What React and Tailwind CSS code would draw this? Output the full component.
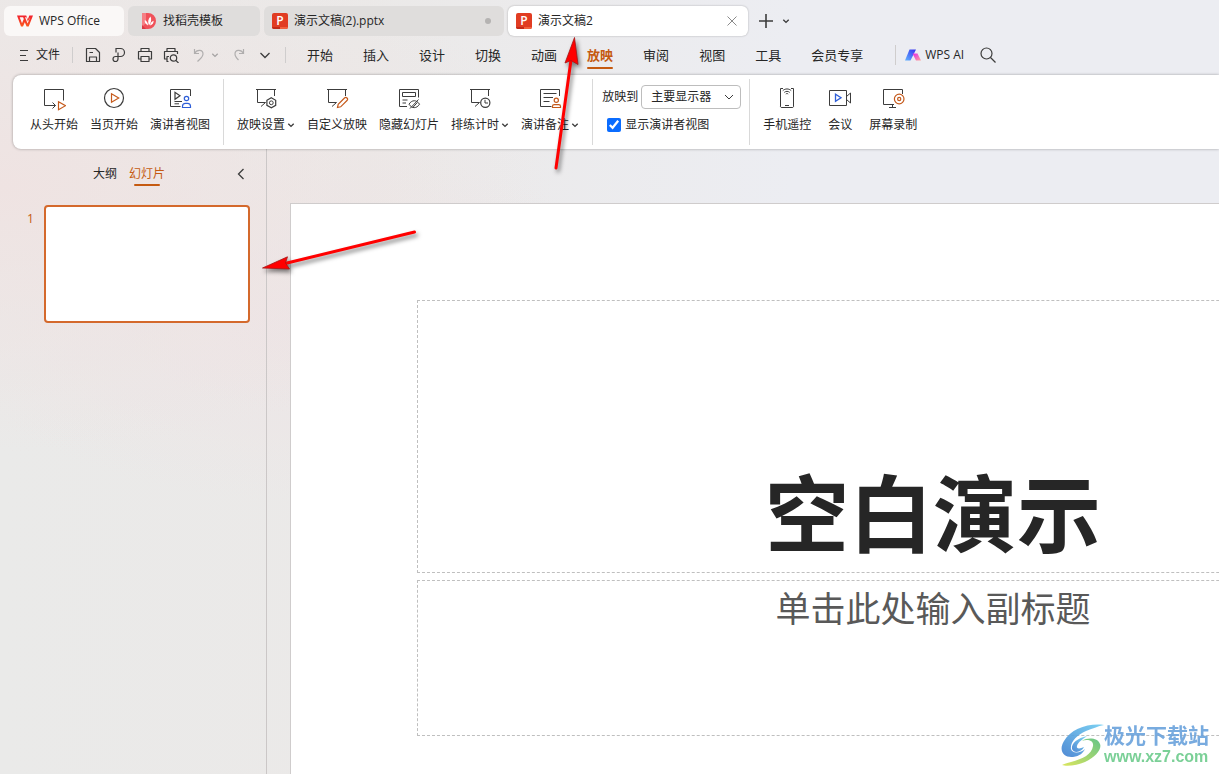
import React, { useState } from 'react';

// Generic stroke icon, drawn on a 24px grid
const Icon = ({ children, className = 'w-6 h-6', viewBox = '0 0 24 24' }) => (
  <svg className={className} viewBox={viewBox} fill="none" stroke="#3c3c3c" aria-hidden="true">
    {children}
  </svg>
);

const ORANGE = '#c55a1c';
const BLUE = '#2f5fd8';

const SmallChevron = () => (
  <Icon className="w-2 h-2" viewBox="0 0 8 8">
    <path d="M1.3 2.8L4 5.4l2.7-2.6" strokeWidth="1.4" />
  </Icon>
);

// Presentation board with a speech tail, shared by several icons
const Board = () => <path d="M2 2.5H22M3.5 2.5V15.5H11.5L7 19.5M20.5 2.5V9" />;

const FromStartIcon = () => (
  <Icon>
    <path d="M21.5 13.5V2.5H2.5V18.5H13.5M10.5 15.5l3 3-3 3" />
    <path d="M16.5 14.7v8l7-4z" stroke={ORANGE} strokeWidth="1.2" />
  </Icon>
);
const FromPageIcon = () => (
  <Icon>
    <circle cx="12" cy="11" r="9.5" strokeWidth="1.2" />
    <path d="M9.5 6.8v8.4l7.2-4.2z" stroke={ORANGE} strokeWidth="1.2" />
  </Icon>
);
const PresenterIcon = () => (
  <Icon>
    <path d="M12.5 19.5H2.5V2.5H22.5V9M6.5 14.5H14M6.5 16.8H11" />
    <path d="M7 5.3v7l5-3.5z" strokeWidth="1.2" />
    <g stroke={BLUE} strokeWidth="1.2">
      <circle cx="18.5" cy="11.5" r="2.2" />
      <path d="M14.5 20.5h8v-1.2a3 3 0 0 0-3-3h-2a3 3 0 0 0-3 3z" />
    </g>
  </Icon>
);
const SettingsIcon = () => (
  <Icon>
    <Board />
    <path d="M17.3 10.8l4.4 2.5v5l-4.4 2.5-4.4-2.5v-5z" strokeWidth="1.2" />
    <circle cx="17.3" cy="15.8" r="1.9" />
  </Icon>
);
const CustomIcon = () => (
  <Icon>
    <Board />
    <path d="M12.5 20.5l.7-3.2 6.3-6.3a1.7 1.7 0 0 1 2.5 2.5l-6.3 6.3z" stroke={ORANGE} strokeWidth="1.2" />
  </Icon>
);
const HideIcon = () => (
  <Icon>
    <path d="M10 19.5H2.5V2.5H21.5V10.5M5.5 5.5h13v4h-13zM5.5 13h5M5.5 16h3.5" />
    <path d="M12 17.2c2.8-4.6 7.7-4.6 10.5 0c-2.8 4.6-7.7 4.6-10.5 0zM13 21.5l8.5-9M15.8 20.5l4.5-5" />
  </Icon>
);
const RehearseIcon = () => (
  <Icon>
    <Board />
    <circle cx="17.3" cy="15.8" r="4.6" strokeWidth="1.2" />
    <path d="M17 12.8v3.2h3" />
  </Icon>
);
const NotesIcon = () => (
  <Icon>
    <path d="M13.5 19.5H2.5V2.5H21.5V9M5.5 6.5h13M5.5 10.5h9.5M5.5 14.5h6" />
    <g stroke={ORANGE} strokeWidth="1.2">
      <circle cx="18.3" cy="13.3" r="2.1" />
      <path d="M14.5 20.5h8v-1.2c0-1-.8-1.6-1.8-1.6h-4.4c-1 0-1.8.6-1.8 1.6z" />
    </g>
  </Icon>
);
const PhoneIcon = () => (
  <Icon>
    <path d="M8 1.5H5.5v18.3l.7.7h11.6l.7-.7V1.5H16M10 18.5h4" />
    <path d="M7.8 3.6c2.4-2.2 6-2.2 8.4 0M9.3 5.4c1.6-1.4 3.8-1.4 5.4 0M10.8 7c.7-.6 1.7-.6 2.4 0" />
  </Icon>
);
const MeetingIcon = () => (
  <Icon>
    <path d="M1.5 3.5h17v15h-17zM18.5 9.5l4-3.5v10l-4-3.5" />
    <path d="M7.5 7.3v7l5.5-3.5z" stroke={BLUE} strokeWidth="1.3" />
  </Icon>
);
const RecordIcon = () => (
  <Icon>
    <path d="M13 17.5H2.5V2.5H21.5V7M11.5 17.5v3M8 20.5h7" />
    <g stroke={ORANGE} strokeWidth="1.2">
      <circle cx="18.2" cy="12" r="4.8" />
      <circle cx="18.2" cy="12" r="1.6" />
    </g>
  </Icon>
);

const WpsLogo = () => (
  <svg className="w-4 h-4" viewBox="0 0 16 16" fill="none" aria-hidden="true">
    <defs>
      <linearGradient id="wps" x1="0" y1="0" x2="0" y2="1">
        <stop offset="0" stopColor="#f2202e" />
        <stop offset="1" stopColor="#fb5a1e" />
      </linearGradient>
    </defs>
    <path
      d="M0 2.5h9.2l1.6 4L12.3 2.5H16l-4.300 11H9.600L7.800 9.200 6 13.500H4zM2.700 4.300l2.300 6 1.800-4.300-.7-1.700zM8 4.300l2.600 6.300 2.700-6.300-2.500 4.200-1.300-4.200z"
      fill="url(#wps)"
      fillRule="evenodd"
    />
  </svg>
);

const DocerLogo = () => (
  <svg className="w-4 h-4" viewBox="0 0 16 16" aria-hidden="true">
    <path d="M1 1.500A1.500 1.500 0 0 1 2.500 0H7a8 8 0 0 1 0 16H1z" fill="#f0525a" />
    <path d="M1 0h4v10l-4 4z" fill="#f58085" />
    <path d="M1 16V12l4 4z" fill="#d93a44" />
    <path d="M8 12.500C6.500 9 7 6 9.500 3.500c1.200 3 .8 6-1.500 9zM7 12.500C4.500 11 3.500 9.500 3.800 7 6 8 7 10 7 12.500zM9 12.500c.3-2.300 1.500-4 3.600-4.800.2 2.300-1.100 4-3.600 4.800z" fill="#fff" />
  </svg>
);

const PptLogo = () => (
  <span className="relative flex w-4 h-4 shrink-0 items-center justify-center overflow-hidden rounded-xs bg-[#e13c22] font-['Open_Sans',sans-serif] text-xs leading-3 font-semibold text-white">
    P
    <span className="absolute bottom-0 left-0 h-0.5 w-2 bg-[#c22a18]"></span>
    <span className="absolute right-0 bottom-0 h-0.5 w-2 bg-[#f2603c]"></span>
  </span>
);

const AiLogo = () => (
  <svg className="w-4 h-4" viewBox="0 0 16 16" aria-hidden="true">
    <defs>
      <linearGradient id="aiBlue" x1="0" y1="1" x2="0.8" y2="0">
        <stop offset="0" stopColor="#62b4ff" />
        <stop offset="1" stopColor="#3a3cf0" />
      </linearGradient>
      <linearGradient id="aiPink" x1="0" y1="0" x2="1" y2="1">
        <stop offset="0" stopColor="#e32be8" />
        <stop offset="1" stopColor="#ffa59a" />
      </linearGradient>
    </defs>
    <path d="M4.500 2.500H11L5.500 13.500H0z" fill="url(#aiBlue)" />
    <path d="M7.500 6.500H12.500L16 13.500H11z" fill="url(#aiPink)" />
  </svg>
);

const menuTabs = ['开始', '插入', '设计', '切换', '动画', '放映', '审阅', '视图', '工具', '会员专享'];

const startTools = [
  { label: '从头开始', icon: FromStartIcon },
  { label: '当页开始', icon: FromPageIcon },
  { label: '演讲者视图', icon: PresenterIcon },
];
const setupTools = [
  { label: '放映设置', icon: SettingsIcon, menu: true },
  { label: '自定义放映', icon: CustomIcon },
  { label: '隐藏幻灯片', icon: HideIcon },
  { label: '排练计时', icon: RehearseIcon, menu: true },
  { label: '演讲备注', icon: NotesIcon, menu: true },
];
const deviceTools = [
  { label: '手机遥控', icon: PhoneIcon },
  { label: '会议', icon: MeetingIcon },
  { label: '屏幕录制', icon: RecordIcon },
];

const ToolButton = ({ tool }) => {
  const ToolIcon = tool.icon;
  return (
    <button type="button" className="flex flex-col items-center gap-1.5">
      <ToolIcon />
      <span className="flex items-center gap-0.5 text-xs leading-4 whitespace-nowrap">
        {tool.label}
        {tool.menu && <SmallChevron />}
      </span>
    </button>
  );
};

const Divider = () => <div className="my-1 w-px shrink-0 bg-[#d9d9d9]"></div>;

const TitleBar = () => (
  <header className="flex h-9 items-end gap-1 px-1 text-xs">
    <button type="button" className="flex h-[30px] w-[120px] items-center gap-1.5 rounded-md bg-[#faf8f7] pl-[13px]">
      <WpsLogo />
      WPS Office
    </button>
    <button type="button" className="flex h-[30px] w-[132px] items-center gap-1.5 rounded-md bg-[#dfdddc] pl-[13px]">
      <DocerLogo />
      找稻壳模板
    </button>
    <button type="button" className="flex h-[30px] w-60 items-center gap-1.5 rounded-md bg-[#dfdddc] px-2">
      <PptLogo />
      演示文稿(2).pptx
      <span className="mr-[5px] ml-auto h-1.5 w-1.5 rounded-full bg-[#b5b3b2]"></span>
    </button>
    <div className="flex h-[30px] w-60 items-center rounded-md bg-white px-2 shadow-[0_0_2px_rgba(0,0,0,0.3)]">
      <button type="button" className="flex flex-1 items-center gap-1.5">
        <PptLogo />
        演示文稿2
      </button>
      <button type="button" aria-label="关闭">
        <Icon className="w-4 h-4" viewBox="0 0 16 16">
          <path d="M3.500 3.500l9 9M12.500 3.500l-9 9" stroke="#8a8a8a" />
        </Icon>
      </button>
    </div>
    <div className="flex h-[30px] items-center gap-2 pl-1.5">
      <button type="button" aria-label="新建">
        <Icon className="w-4 h-4" viewBox="0 0 16 16">
          <path d="M8 1v14M1 8h14" strokeWidth="1.600" />
        </Icon>
      </button>
      <button type="button" aria-label="标签列表">
        <SmallChevron />
      </button>
    </div>
  </header>
);

const QuickAccess = () => (
  <div className="flex items-center gap-2.5">
    <button type="button" aria-label="保存">
      <Icon className="w-4 h-4" viewBox="0 0 16 16">
        <path d="M1.500 1.500h9l4 4v9h-13zM4.500 14.500v-4.500h7v4.500M4.500 5.500h3.500" strokeWidth="1.200" strokeLinejoin="round" />
      </Icon>
    </button>
    <button type="button" aria-label="输出为PDF">
      <Icon className="w-4 h-4" viewBox="0 0 16 16">
        <path d="M5 5.500V1.500h4.500a4 4 0 0 1 0 8H4.500a2.500 2.500 0 1 0 2.500 2.500V5.500" strokeWidth="1.200" />
      </Icon>
    </button>
    <button type="button" aria-label="打印">
      <Icon className="w-4 h-4" viewBox="0 0 16 16">
        <path d="M4 4.500v-3h8v3M3.500 12H1.500V4.500h13V12H12.500M4 9.500h8v5H4z" strokeWidth="1.200" strokeLinejoin="round" />
      </Icon>
    </button>
    <button type="button" aria-label="打印预览">
      <Icon className="w-4 h-4" viewBox="0 0 16 16">
        <path d="M4 4.500v-3h8v3M5.500 14.500H4V12H1.500V4.500h13V7M4 12V9.500h2" strokeWidth="1.200" strokeLinejoin="round" />
        <circle cx="10.500" cy="11" r="3.200" strokeWidth="1.200" />
        <path d="M12.800 13.300l2.700 2.700" strokeWidth="1.200" />
      </Icon>
    </button>
    <div className="flex items-center gap-1 pl-0.5">
      <button type="button" aria-label="撤销">
        <Icon className="w-4 h-4" viewBox="0 0 16 16">
          <path d="M3.500 2v4.500H8M3.500 6.500C6 2 12 2.500 12 7c0 3-2.500 4.500-5.500 7.500" stroke="#b0aeae" strokeWidth="1.200" />
        </Icon>
      </button>
      <button type="button" aria-label="撤销列表">
        <svg className="w-2 h-2" viewBox="0 0 8 8" fill="none" stroke="#a5a3a3" strokeWidth="1.300">
          <path d="M1.300 2.800L4 5.400l2.700-2.600" />
        </svg>
      </button>
    </div>
    <button type="button" aria-label="恢复" className="pl-0.5">
      <Icon className="w-4 h-4" viewBox="0 0 16 16">
        <path d="M12.500 2v4.500H8M12.500 6.500C10 2 4 2.500 4 7c0 2.500 1.500 4 3.500 6" stroke="#b0aeae" strokeWidth="1.200" />
      </Icon>
    </button>
    <button type="button" aria-label="更多">
      <Icon className="w-4 h-4" viewBox="0 0 16 16">
        <path d="M3.500 6l4.500 4.500L12.500 6" strokeWidth="1.300" />
      </Icon>
    </button>
  </div>
);

const MenuBar = ({ active, onSelect }) => (
  <nav className="flex h-[39px] items-center pb-px pl-[19px]">
    <button type="button" className="flex items-center gap-[7px] text-xs">
      <Icon className="w-[10px] h-3" viewBox="0 0 10 12">
        <path d="M1 1.500h8M1 6.500h6M1 11.500h8" />
      </Icon>
      文件
    </button>
    <div className="mx-3 h-4 w-px bg-[#cfcdcd]"></div>
    <QuickAccess />
    <div className="ml-3 h-4 w-px bg-[#cfcdcd]"></div>
    <div className="ml-[21px] flex gap-[30px] text-[13px] leading-4">
      {menuTabs.map((tab) => (
        <button
          key={tab}
          type="button"
          onClick={() => onSelect(tab)}
          className={
            tab === active
              ? 'relative whitespace-nowrap font-bold text-[#c55a11]'
              : 'relative whitespace-nowrap'
          }
        >
          {tab}
          {tab === active && <span className="absolute inset-x-0 -bottom-1.5 h-0.5 rounded-full bg-[#c55a11]"></span>}
        </button>
      ))}
    </div>
    <div className="ml-8 h-5 w-px bg-[#cfcdcd]"></div>
    <button type="button" className="ml-[9px] flex items-center gap-1 text-xs whitespace-nowrap">
      <AiLogo />
      WPS AI
    </button>
    <button type="button" aria-label="搜索" className="ml-4">
      <Icon className="w-4 h-4" viewBox="0 0 16 16">
        <circle cx="6.500" cy="6.500" r="5.500" strokeWidth="1.200" />
        <path d="M10.500 10.500l5 5" strokeWidth="1.200" />
      </Icon>
    </button>
  </nav>
);

const Ribbon = () => {
  const [presenterView, setPresenterView] = useState(true);

  return (
    <section className="relative ml-[13px] flex h-[74px] rounded-l-lg bg-white shadow-[0_0_3px_rgba(0,0,0,0.35)]">
      <div className="flex items-start gap-3 pt-3 pr-[13px] pl-[17px]">
        {startTools.map((tool) => <ToolButton key={tool.label} tool={tool} />)}
      </div>
      <Divider />
      <div className="flex items-start gap-3 px-[13px] pt-3">
        {setupTools.map((tool) => <ToolButton key={tool.label} tool={tool} />)}
      </div>
      <Divider />
      <div className="flex flex-col items-start gap-2 pt-2.5 pr-2 pl-[9px] text-xs leading-4">
        <div className="flex items-center gap-[3px]">
          <label htmlFor="display">放映到</label>
          <div className="relative">
            <select id="display" className="h-6 w-[100px] appearance-none rounded-sm border border-[#bdbdbd] bg-white pl-[9px]">
              <option>主要显示器</option>
            </select>
            <Icon className="pointer-events-none absolute top-1.5 right-1.5 w-3 h-3" viewBox="0 0 12 12">
              <path d="M2 4l4 4 4-4" />
            </Icon>
          </div>
        </div>
        <label className="flex items-center gap-1 pl-[5px]">
          <input
            type="checkbox"
            checked={presenterView}
            onChange={(e) => setPresenterView(e.target.checked)}
            className="h-3.5 w-3.5 accent-[#0a6cff]"
          />
          显示演讲者视图
        </label>
      </div>
      <Divider />
      <div className="flex items-start gap-[17px] pt-3 pl-[13px]">
        {deviceTools.map((tool) => <ToolButton key={tool.label} tool={tool} />)}
      </div>
    </section>
  );
};

const SlidePanel = () => (
  <aside className="w-[267px] shrink-0 border-r border-[#cbc7c7]">
    <div className="flex h-[50px] items-center gap-3 pr-[19px] pl-[93px] text-xs leading-4">
      <button type="button">大纲</button>
      <button type="button" className="relative text-[#c55a11]">
        幻灯片
        <span className="absolute inset-x-[5px] -bottom-1 h-0.5 rounded-full bg-[#c55a11]"></span>
      </button>
      <button type="button" aria-label="收起" className="ml-auto">
        <Icon className="w-3 h-3" viewBox="0 0 12 12">
          <path d="M8.500 1L3.500 6l5 5" strokeWidth="1.300" />
        </Icon>
      </button>
    </div>
    <ol>
      <li className="flex pt-1.5 pr-4">
        <span className="w-11 pt-1.5 pl-[27px] text-xs leading-4 text-[#c55a11]">1</span>
        <button type="button" aria-label="幻灯片 1" className="h-[118px] flex-1 rounded-sm border-2 border-[#d4692c] bg-white"></button>
      </li>
    </ol>
  </aside>
);

const Slide = () => (
  <main className="min-w-0 flex-1 overflow-hidden pt-[54px] pl-[23px]">
    {/* The canvas is wider than the window at this zoom level */}
    <div className="h-[724px] w-[1286px] border border-[#cfcccc] bg-white px-[126px] pt-24">
      <div className="flex h-[273px] items-end justify-center border border-dashed border-[#bfbfbf] pb-2.5">
        <h1 className="text-[84px] leading-[96px] font-bold text-[#262626]">空白演示</h1>
      </div>
      <div className="mt-[7px] flex h-[156px] justify-center border border-dashed border-[#bfbfbf] pt-1">
        <p className="text-[35px] leading-[48px] text-[#595959]">单击此处输入副标题</p>
      </div>
    </div>
  </main>
);

const Watermark = () => (
  <div className="pointer-events-none absolute right-2.5 bottom-[7px] flex items-center opacity-90">
    <svg className="h-11 w-11" viewBox="0 0 44 44" aria-hidden="true">
      <defs>
        <linearGradient id="swirlBlue" x1="0" y1="1" x2="1" y2="0">
          <stop offset="0" stopColor="#3f7fd0" />
          <stop offset="1" stopColor="#6fcdf2" />
        </linearGradient>
        <linearGradient id="swirlGreen" x1="0" y1="1" x2="1" y2="0">
          <stop offset="0" stopColor="#d8e34c" />
          <stop offset="1" stopColor="#54bf7c" />
        </linearGradient>
      </defs>
      <path d="M44 2C28 0 11 6 4 18c-6 10 0 17 9 16 7-1 10-4 12-8-4 4-13 5-14 0-1-7 6-14 15-18C32 6 38 3 44 2z" fill="url(#swirlBlue)" />
      <path d="M27 13C18 15 11 20 12 26c2 5 10 3 12-2-4 2-8 2-7-1 1-4 6-7 10-10z" fill="url(#swirlBlue)" />
      <path d="M22 18c5-2 12-1 11 5-1 8-10 13-22 16-4 1-7 2-9 3 5 2 16 0 23-3 11-5 17-13 15-18-2-6-12-7-18-3z" fill="url(#swirlGreen)" />
    </svg>
    <div className="flex flex-col">
      <span className="text-[21px] leading-6 font-bold text-[#6aa2dc]">极光下载站</span>
      <span className="font-['Liberation_Sans',sans-serif] text-base leading-5 font-bold text-[#6dcb8c]">www.xz7.com</span>
    </div>
  </div>
);

const Arrows = () => (
  <svg className="pointer-events-none absolute top-0 left-0 h-[300px] w-[640px] drop-shadow-[2px_3px_2px_rgba(0,0,0,0.5)]" viewBox="0 0 640 300" fill="#f00" stroke="#f00" aria-hidden="true">
    <path d="M571 60L556 168" strokeWidth="3" strokeLinecap="round" />
    <path d="M574.500 37.500L565 63l6-2.500 7 4z" stroke="#a31515" strokeWidth="0.800" />
    <path d="M285 263.500L414.500 232" strokeWidth="3" strokeLinecap="round" />
    <path d="M262.500 268L287.500 256.800l-2 6.200 4 6z" stroke="#a31515" strokeWidth="0.800" />
  </svg>
);

const App = () => {
  const [activeTab, setActiveTab] = useState('放映');

  return (
    <div className="relative flex h-screen flex-col overflow-hidden bg-[#eaeae9] bg-[radial-gradient(ellipse_at_0%_24%,#efe3e2_0%,transparent_32%),radial-gradient(ellipse_at_25%_42%,#ede5e6_0%,transparent_28%),linear-gradient(90deg,#eaeae9_0%,#ebe9e8_30%,#ecedf2_65%)] font-['Open_Sans','Noto_Sans_CJK_SC',sans-serif] text-[#262626]">
      <TitleBar />
      <MenuBar active={activeTab} onSelect={setActiveTab} />
      <Ribbon />
      <div className="flex min-h-0 flex-1">
        <SlidePanel />
        <Slide />
      </div>
      <Watermark />
      <Arrows />
    </div>
  );
};

export default App;
